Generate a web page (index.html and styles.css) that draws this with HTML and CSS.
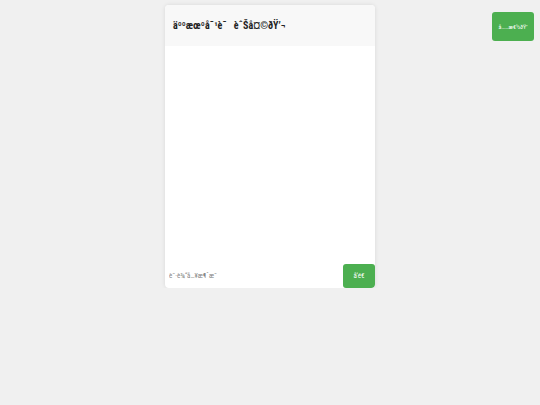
FILE: index.html
```html
<!DOCTYPE html>
<html>
<head>
<meta charset="utf-8">
<link rel="stylesheet" href="styles.css">
</head>
<body>
<div class="chat">
  <div class="chat-header">äººæœºå¯¹è¯   èˆŠå¤©ðŸ’¬</div>
  <div class="chat-messages"></div>
  <div class="chat-input">
    <input class="msg" type="text" placeholder="è¯·è¾“å…¥æ¶ˆæ¯">
    <button class="send">å‘é€</button>
  </div>
</div>
<button class="corner">å……æ€½ðŸ’</button>
</body>
</html>
```
FILE: styles.css
```css
html, body {
  margin: 0;
  padding: 0;
  background: #f0f0f0;
  font-family: "Roboto Condensed", "Liberation Sans", sans-serif;
}
.chat {
  width: 210px;
  height: 283px;
  margin: 5px auto 0;
  background: #fff;
  border-radius: 4px;
  box-shadow: 0 0 4px rgba(0,0,0,0.1);
  display: flex;
  flex-direction: column;
  overflow: hidden;
}
.chat-header {
  height: 41px;
  box-sizing: border-box;
  padding: 0 8px;
  display: flex;
  align-items: center;
  background: #f8f8f8;
  font-weight: bold;
  font-size: 10px;
  color: #222;
  white-space: pre;
}
.chat-messages {
  flex: 1;
}
.chat-input {
  display: flex;
  height: 24px;
}
.msg {
  flex: 1;
  min-width: 0;
  border: none;
  outline: none;
  padding: 0 4px;
  font-size: 7px;
  font-family: inherit;
  background: transparent;
}
.msg::placeholder {
  color: #888;
}
.send {
  width: 32px;
  border: none;
  border-radius: 3px;
  background: #4caf50;
  color: #fff;
  font-size: 7px;
  font-family: inherit;
  padding: 0;
}
.corner {
  position: fixed;
  top: 12px;
  right: 6px;
  width: 42px;
  height: 29px;
  border: none;
  border-radius: 3px;
  background: #4caf50;
  color: #fff;
  font-size: 6px;
  font-family: inherit;
  padding: 0;
}
```
